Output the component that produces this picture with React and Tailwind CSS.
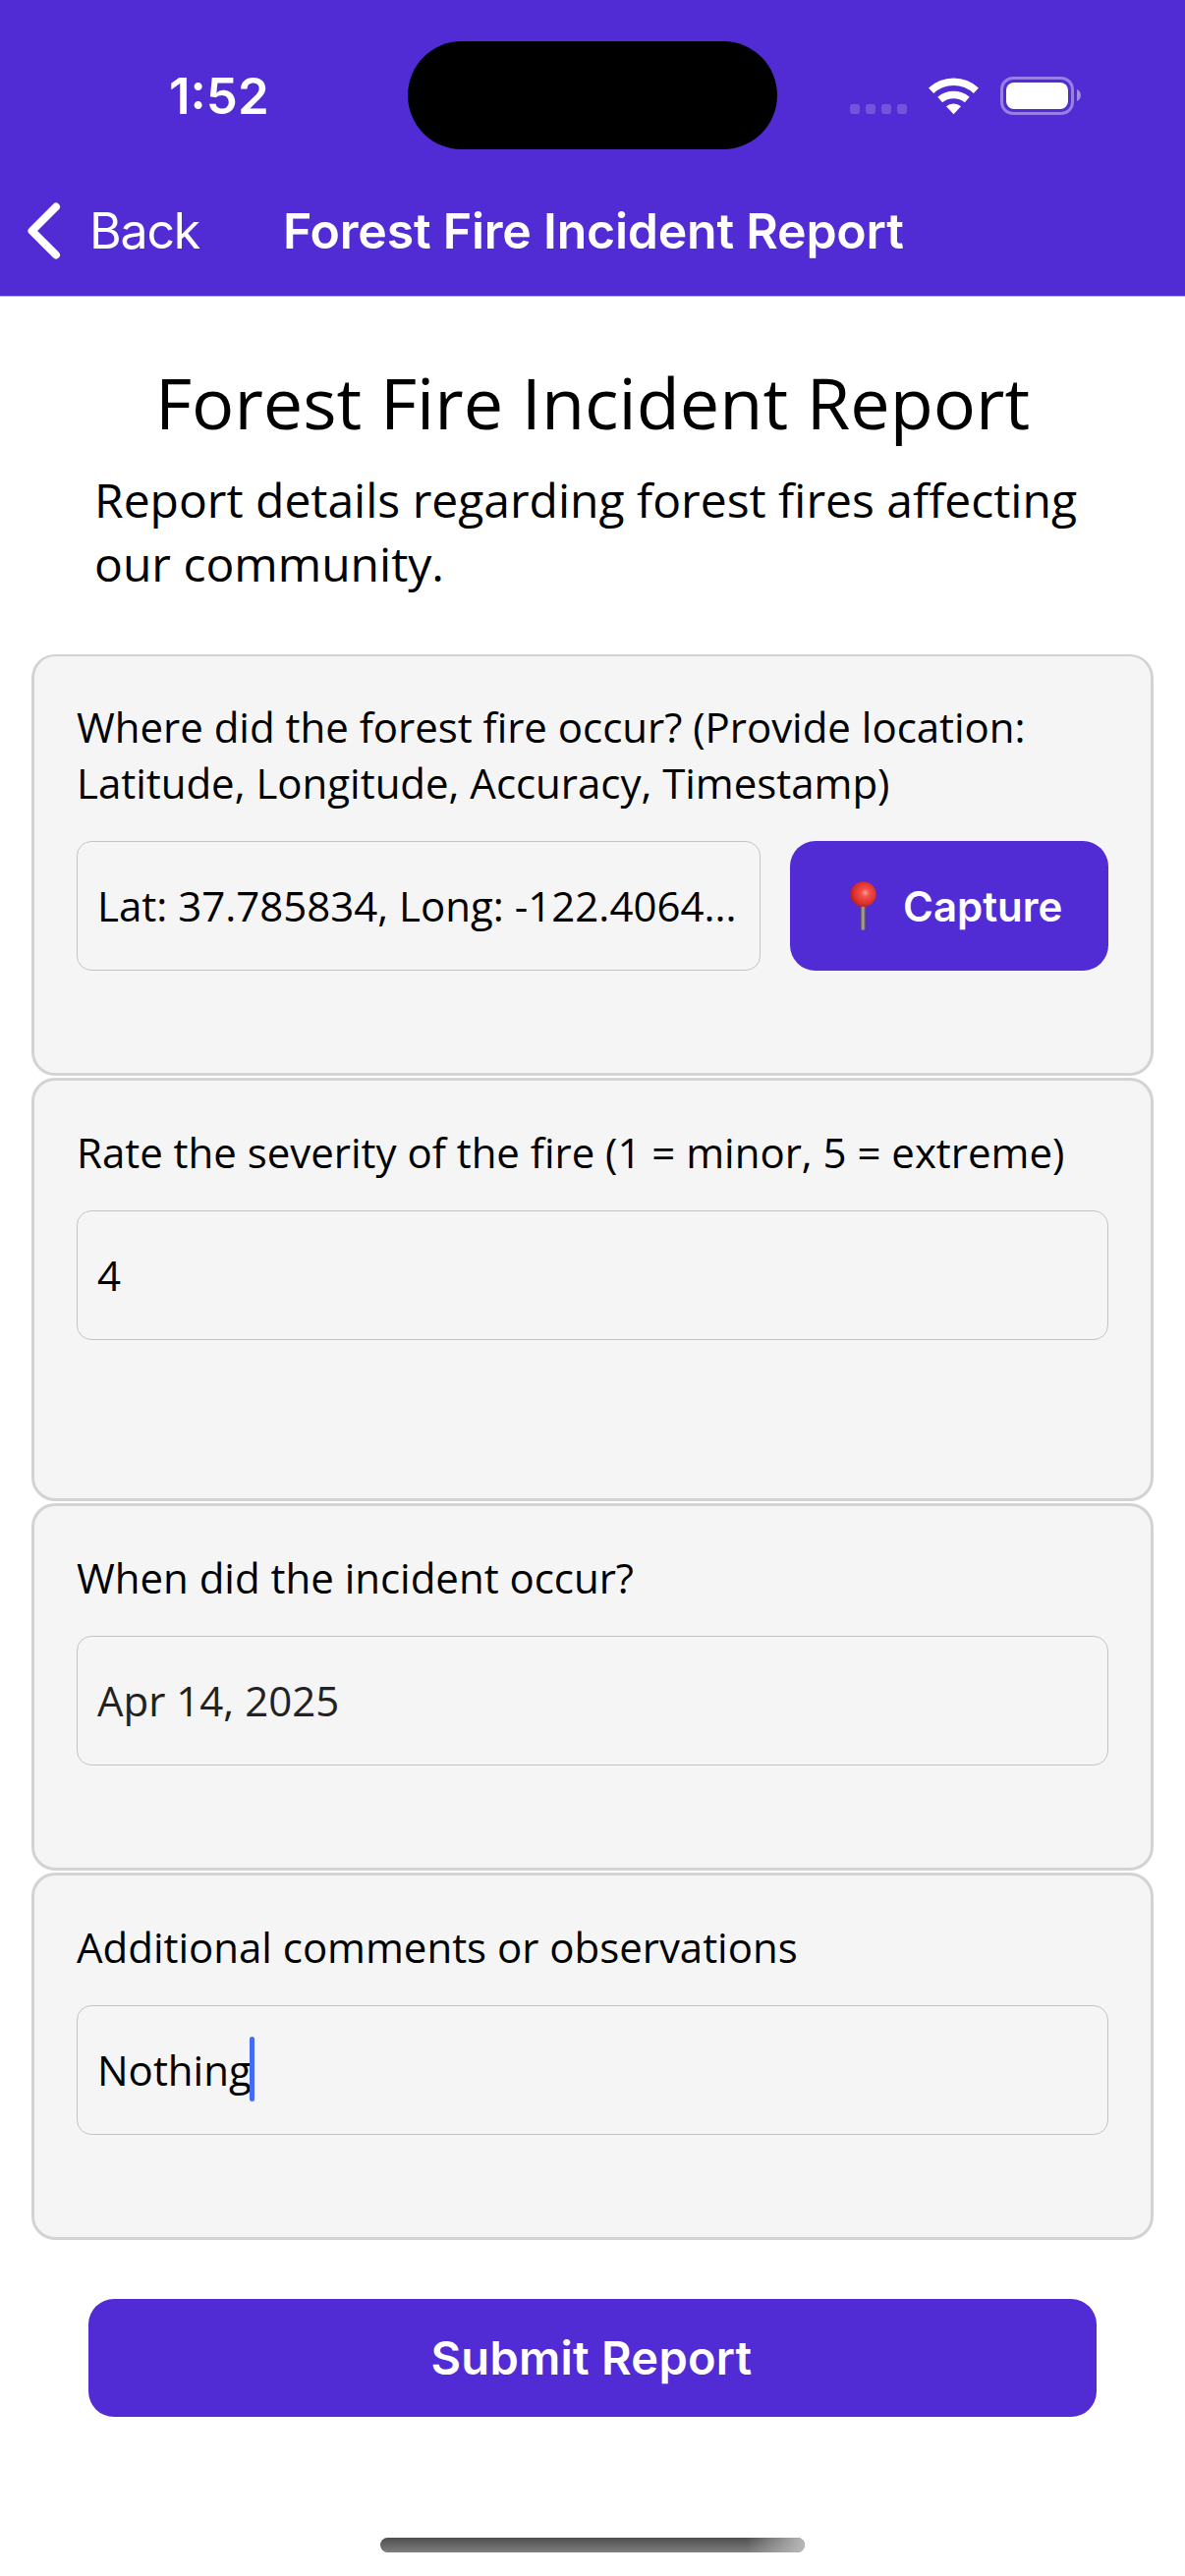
function Card({ className, label, children }) {
  return (
    <section className={`shrink-0 rounded-[24px] border-[3px] border-[#d3d3d3] bg-[#f5f5f5] px-[43px] ${className}`}>
      <div className="text-[42px] leading-[57px] tracking-[-0.02px] whitespace-pre">{label}</div>
      <div className="mt-[31px] flex gap-[30px]">{children}</div>
    </section>
  );
}

function Field({ className = "", children }) {
  return (
    <div className={`flex h-[132px] items-center rounded-[15px] border border-[#c3c3c3] px-[20px] pb-[2px] text-[42px] leading-[57px] whitespace-nowrap ${className}`}>
      {children}
    </div>
  );
}

function StatusBar() {
  return (
    <div className="relative h-[170px] text-white">
      <div className="absolute left-[172px] top-[66px] font-['Inter'] text-[51px] leading-[64px] font-semibold">1:52</div>
      <div className="absolute left-[415px] top-[42px] h-[110px] w-[376px] rounded-full bg-black" />
      <svg className="absolute left-[860px] top-[70px]" width="245" height="56" viewBox="860 70 245 56" fill="none">
        <g fill="#fff" fillOpacity=".2">
          <rect x="865" y="106" width="10" height="10" rx="3" />
          <rect x="881" y="106" width="10" height="10" rx="3" />
          <rect x="897" y="106" width="10" height="10" rx="3" />
          <rect x="913" y="106" width="10" height="10" rx="3" />
        </g>
        <g stroke="#fff" strokeWidth="7.5">
          <path d="M947.6 92.2A33.5 33.5 0 0 1 993.4 92.2" />
          <path d="M956.7 101.5A21.3 21.3 0 0 1 984.3 101.5" />
        </g>
        <path d="M963 108.3a11.5 11.5 0 0 1 15 0l-7.5 7.9z" fill="#fff" />
        <rect x="1019.5" y="79.5" width="72" height="36" rx="11.5" stroke="#fff" strokeOpacity=".4" strokeWidth="3" />
        <rect x="1024" y="84" width="63" height="27" rx="8" fill="#fff" />
        <path d="M1096 91c5.3 2 5.3 10 0 12z" fill="#fff" fillOpacity=".45" />
      </svg>
    </div>
  );
}

function Pin() {
  return (
    <svg width="28" height="50" viewBox="0 0 28 50">
      <defs>
        <radialGradient id="ball" cx=".58" cy=".45" r=".62">
          <stop offset="0" stopColor="#ff9c90" />
          <stop offset=".25" stopColor="#f2524b" />
          <stop offset=".7" stopColor="#dc2f2c" />
          <stop offset="1" stopColor="#a81c22" />
        </radialGradient>
        <linearGradient id="needle">
          <stop offset="0" stopColor="#5c5450" />
          <stop offset=".5" stopColor="#b5aaa2" />
          <stop offset="1" stopColor="#5c5450" />
        </linearGradient>
      </defs>
      <rect x="11.8" y="22" width="5" height="27.5" rx="1.5" fill="url(#needle)" />
      <ellipse cx="14.5" cy="13.2" rx="13.2" ry="12.8" fill="url(#ball)" />
    </svg>
  );
}

export default function App() {
  return (
    <main className="flex h-[2622px] w-[1206px] flex-col overflow-hidden bg-white font-['Open_Sans',sans-serif] text-black">
      <header className="h-[302px] shrink-0 border-b border-[#b1a6dc] bg-[#512bd4] text-white">
        <StatusBar />
        <nav className="flex items-center pt-[32px] font-['Inter'] text-[50px] leading-[64px]">
          <svg className="ml-[24px]" width="42" height="66" viewBox="0 0 42 66" fill="none" stroke="#fff" strokeWidth="8" strokeLinecap="round" strokeLinejoin="round">
            <path d="M33 8.5 8.5 33 33 57.5" />
          </svg>
          <span className="ml-[25px] tracking-[-1.2px]">Back</span>
          <span className="ml-[85px] font-semibold tracking-[-0.22px]">Forest Fire Incident Report</span>
        </nav>
      </header>
      <h1 className="mx-auto mt-[58px] text-[72px] leading-[98px]">Forest Fire Incident Report</h1>
      <p className="mt-[18px] ml-[96px] text-[48px] leading-[65px]">
        Report details regarding forest fires affecting
        <br />
        our community.
      </p>
      <div className="mx-[32px] mt-[60px] flex flex-col gap-[2px]">
        <Card
          className="h-[429px] border-t-2 pt-[43px]"
          label={"Where did the forest fire occur? (Provide location:\nLatitude, Longitude, Accuracy, Timestamp)"}
        >
          <Field className="w-[696px]">Lat: 37.785834, Long: -122.4064...</Field>
          <button className="flex h-[132px] w-[324px] items-center rounded-[26px] bg-[#512bd4] pl-[60px] font-['Inter'] text-[42px] font-semibold text-white">
            <Pin />
            <span className="ml-[27px]">Capture</span>
          </button>
        </Card>
        <Card className="h-[431px] pt-[44px]" label="Rate the severity of the fire (1 = minor, 5 = extreme)">
          <Field className="w-full">4</Field>
        </Card>
        <Card className="h-[374px] pt-[44px]" label="When did the incident occur?">
          <Field className="w-full text-[#222]">Apr 14, 2025</Field>
        </Card>
        <Card className="h-[374px] pt-[44px]" label="Additional comments or observations">
          <Field className="w-full">
            Nothing
            <span className="-ml-[2px] h-[66px] w-[5px] rounded-full bg-[#436cf3]" />
          </Field>
        </Card>
      </div>
      <button className="mx-[90px] mt-[60px] h-[120px] shrink-0 rounded-[26px] bg-[#512bd4] pr-[2px] font-['Inter'] text-[47px] font-semibold tracking-[0.25px] text-white">
        Submit Report
      </button>
      <div className="mx-auto mt-[123px] h-[15px] w-[432px] shrink-0 overflow-hidden rounded-full bg-linear-to-b from-[#4e4e4e] to-[#7e7e7e]">
        <div className="ml-auto h-full w-[60px] bg-linear-to-r from-transparent to-[#b9b9b9]" />
      </div>
    </main>
  );
}
